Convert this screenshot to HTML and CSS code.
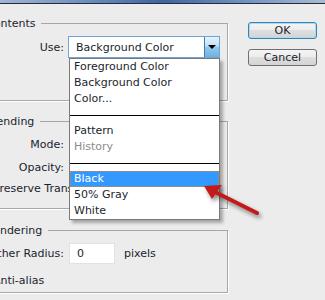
FILE: index.html
```html
<!DOCTYPE html>
<html lang="en">
  <head>
    <meta charset="UTF-8" />
    <title>Fill</title>
    <link rel="stylesheet" href="styles.css">
  </head>
  <body>
    <div class="titlebar"></div>
    <div class="dialog">
      <div class="panel">
        <div class="group group-contents">
          <div class="legend"><span>Contents</span></div>
          <div class="row row-use">
            <span class="label">Use:</span>
            <div class="select">
              <span class="select-value">Background Color</span>
              <span class="select-btn"></span>
              <ul class="menu">
                <li>Foreground Color</li>
                <li>Background Color</li>
                <li>Color...</li>
                <li class="sep"></li>
                <li>Pattern</li>
                <li class="muted">History</li>
                <li class="sep"></li>
                <li class="active">Black</li>
                <li>50% Gray</li>
                <li>White</li>
              </ul>
            </div>
          </div>
        </div>

        <div class="group group-blending">
          <div class="legend"><span>Blending</span></div>
          <div class="row row-mode">
            <span class="label">Mode:</span>
          </div>
          <div class="row row-opacity">
            <span class="label">Opacity:</span>
          </div>
          <div class="row row-check">
            <span class="check"></span>
            <span>Preserve Transparency</span>
          </div>
        </div>

        <div class="group group-rendering">
          <div class="legend"><span>Rendering</span></div>
          <div class="row row-radius">
            <span class="label">Feather Radius:</span>
            <span class="num">0</span>
            <span class="unit">pixels</span>
          </div>
          <div class="row row-check row-alias">
            <span class="check"></span>
            <span>Anti-alias</span>
          </div>
        </div>
      </div>

      <div class="buttons">
        <button class="btn btn-default">OK</button>
        <button class="btn">Cancel</button>
      </div>
    </div>

    <svg class="pointer" viewBox="0 0 325 300">
      <g class="arrow">
        <line x1="257" y1="213" x2="215" y2="192" stroke="#c31a1a" stroke-width="4" stroke-linecap="round" />
        <polygon points="204,186 222,185 212,199" fill="#c31a1a" />
      </g>
    </svg>
  </body>
</html>
```

FILE: styles.css
```css
body {
  margin: 0;
  height: 300px;
  overflow: hidden;
  position: relative;
  background-color: #ececec;
  font-family: "DejaVu Sans", Tahoma, sans-serif;
  font-size: 11px;
  color: #1a1f2e;
}
.titlebar {
  height: 3px;
  background: linear-gradient(90deg, #a3b6d1, #7291bf 25%, #3f659f 50%, #7291bf 75%, #a9bbd3);
  border-bottom: 1px solid #222c3c;
}
.dialog {
  display: flex;
}
.panel {
  flex: none;
  width: 258px;
  margin-left: -30px;
}
.group {
  display: flex;
  flex-direction: column;
  border-right: 1px solid #a7a7a7;
  border-bottom: 1px solid #a7a7a7;
  box-shadow: 1px 1px 0 #fff;
}
.group-contents {
  margin-top: 19px;
  height: 77px;
}
.group-blending {
  margin-top: 20px;
  height: 87px;
}
.group-rendering {
  margin-top: 21px;
  height: 62px;
}
.legend {
  display: flex;
  align-items: center;
  height: 15px;
  margin-top: -7px;
  margin-right: -1px;
  padding-left: 16px;
}
.legend::after {
  content: "";
  flex: 1;
  border-top: 1px solid #a7a7a7;
  margin-left: 6px;
}
.row {
  display: flex;
  align-items: center;
}
.label {
  flex: none;
  width: 94px;
  text-align: right;
  white-space: nowrap;
}
.row-use {
  margin-top: 5px;
}
.row-mode {
  margin-top: 4px;
  height: 22px;
}
.row-opacity {
  margin-top: 1px;
  height: 22px;
}
.row-check {
  margin-top: 1px;
  height: 18px;
  padding-left: 4px;
  white-space: nowrap;
}
.row-radius {
  margin-top: 5px;
  height: 21px;
}
.row-alias {
  margin-top: 7px;
}
.check {
  flex: none;
  width: 13px;
  height: 13px;
  box-sizing: border-box;
  border: 1px solid #8f8f8f;
  background: linear-gradient(#dcdcdc, #fbfbfb);
  margin-right: 6px;
}
.num {
  width: 46px;
  height: 21px;
  box-sizing: border-box;
  margin-left: 5px;
  padding-left: 7px;
  line-height: 19px;
  background: #fff;
  border: 1px solid #e2e2e2;
}
.unit {
  margin-left: 9px;
}

/* dropdown */
.select {
  position: relative;
  display: flex;
  align-items: center;
  width: 152px;
  height: 22px;
  box-sizing: border-box;
  margin-left: 4px;
  background: #fff;
  border: 1px solid #6fa4d8;
}
.select-value {
  flex: 1;
  padding-left: 7px;
}
.select-btn {
  display: flex;
  align-items: center;
  justify-content: center;
  width: 14px;
  height: 20px;
  border-left: 1px solid #3c7fb1;
  background: linear-gradient(#e5f3fc, #bfe1f7 45%, #93c9ee 50%, #6fb0e0);
}
.select-btn::after {
  content: "";
  border-top: 4px solid #000;
  border-left: 4px solid transparent;
  border-right: 4px solid transparent;
}
.menu {
  position: absolute;
  left: 0;
  top: 21px;
  z-index: 2;
  width: 151px;
  box-sizing: border-box;
  margin: 0;
  padding: 0;
  list-style: none;
  background: #fff;
  border: 1px solid #7a7a7a;
  box-shadow: 3px 3px 3px rgba(0, 0, 0, 0.3);
}
.menu li {
  height: 16px;
  line-height: 16px;
  padding-left: 4px;
  white-space: nowrap;
}
.menu .sep {
  height: 1px;
  padding: 0;
  margin: 8px 0 7px;
  background: #000;
}
.menu .muted {
  color: #8c8c8c;
}
.menu .active {
  background: #3399ff;
  color: #fff;
  outline: 1px dotted #d9862a;
  outline-offset: -1px;
}

/* buttons */
.buttons {
  display: flex;
  flex-direction: column;
  margin-left: 20px;
}
.btn {
  width: 69px;
  height: 17px;
  padding: 0;
  font: inherit;
  color: #1a1f2e;
  line-height: 15px;
  border: 1px solid #707070;
  border-radius: 3px;
  background: linear-gradient(#f4f4f4, #ececec 50%, #dedede 50%, #d4d4d4);
}
.btn-default {
  margin-top: 18px;
  border-color: #3c7fb1;
  box-shadow: inset 0 0 0 1px #a6dcf6;
}
.btn + .btn {
  margin-top: 10px;
}

.pointer {
  position: absolute;
  left: 0;
  top: 0;
  width: 325px;
  height: 300px;
  z-index: 3;
  pointer-events: none;
}
.arrow {
  filter: drop-shadow(2px 3px 2px rgba(0, 0, 0, 0.45));
}
```
